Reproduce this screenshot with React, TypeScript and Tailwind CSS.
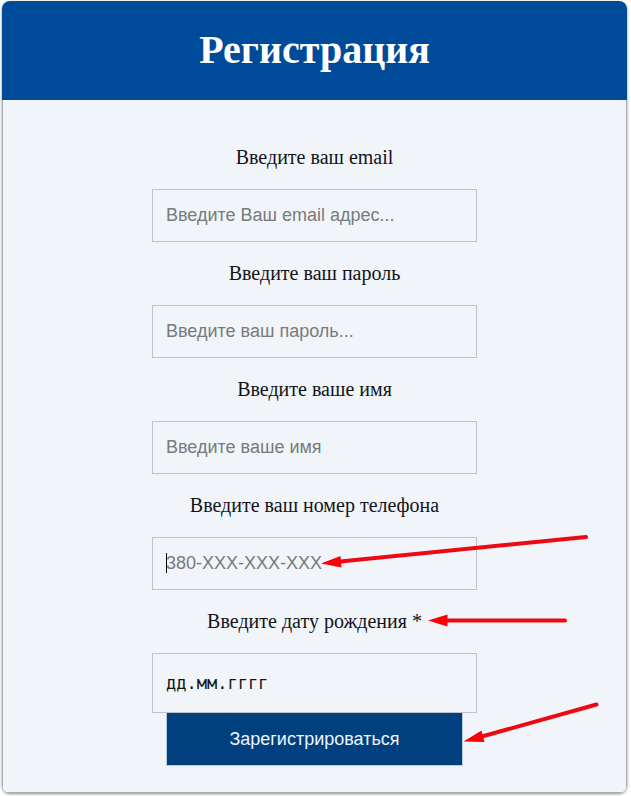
import React from "react";

type FieldProps = {
  id: string;
  label: string;
  placeholder: string;
  type?: string;
  caret?: boolean;
};

const labelClass =
  "block pb-4 pt-4 text-center font-['Liberation_Serif',serif] text-[20px] leading-[31px] text-[#111418]";

function Field({ id, label, placeholder, type = "text", caret = false }: FieldProps) {
  return (
    <div>
      <label htmlFor={id} className={labelClass}>
        {label}
      </label>
      <div className="relative">
        <input
          id={id}
          type={type}
          placeholder={placeholder}
          className="block h-[53px] w-full border border-[#bfc3c9] bg-transparent px-[13px] font-['Liberation_Sans',Arial,sans-serif] text-[18px] text-[#111418] outline-none placeholder:text-[#777a7e]"
        />
        {caret && <span aria-hidden="true" className="absolute left-[14px] top-4 h-5 w-px bg-black" />}
      </div>
    </div>
  );
}

function Arrows() {
  return (
    <svg
      aria-hidden="true"
      viewBox="152 100 325 692"
      width="325"
      height="692"
      className="pointer-events-none absolute left-0 top-0 overflow-visible"
      fill="#fa0007"
      stroke="#ee0811"
      strokeWidth="4"
      strokeLinecap="round"
    >
      <path d="M338 561.7 586 537" />
      <path stroke="none" d="M321 563.5 340.5 556 341.5 567.5Z" />
      <path d="M445 620.5H565" />
      <path stroke="none" d="M428 620.5 447.5 614.5V626.5Z" />
      <path d="M481 736.8 596.5 704.5" />
      <path stroke="none" d="M463.5 741.5 481.5 730.5 484.5 742Z" />
    </svg>
  );
}

export default function App() {
  return (
    <main className="bg-white pb-[3px] pl-[2px] pr-1 pt-px">
      <section className="overflow-hidden rounded-lg bg-[#f1f5fa] shadow-[0_1px_3px_rgba(0,0,0,0.45)]">
        <header className="bg-[#004b99] pb-[26px] pt-[25px] text-center">
          <h1 className="font-['Liberation_Serif',serif] text-[40px] font-bold leading-[48px] text-white">
            Регистрация
          </h1>
        </header>
        <div className="border-x border-b border-[#a9acb1] pb-[26px] pt-[26px]">
          <form className="relative mx-auto w-full max-w-[325px]" onSubmit={(e) => e.preventDefault()}>
            <Field id="email" label="Введите ваш email" placeholder="Введите Ваш email адрес..." type="email" />
            <Field id="password" label="Введите ваш пароль" placeholder="Введите ваш пароль..." type="password" />
            <Field id="name" label="Введите ваше имя" placeholder="Введите ваше имя" />
            <Field id="phone" label="Введите ваш номер телефона" placeholder="380-XXX-XXX-XXX" type="tel" caret />
            <label htmlFor="birthday" className={labelClass}>
              Введите дату рождения *
            </label>
            <input
              id="birthday"
              type="text"
              inputMode="numeric"
              placeholder="дд.мм.гггг"
              className="block h-[60px] w-full border border-[#bfc3c9] bg-transparent px-[13px] font-['DejaVu_Sans_Mono',monospace] text-[17px] text-[#111418] outline-none placeholder:text-[#111418]"
            />
            <div className="px-[14px]">
              <button
                type="submit"
                className="block h-[53px] w-full border border-t-0 border-[#b4cbe0] bg-[#00407f] font-['Liberation_Sans',Arial,sans-serif] text-[18px] text-[#eef5fc]"
              >
                Зарегистрироваться
              </button>
            </div>
            <div className="absolute -top-[26px] left-0">
              <Arrows />
            </div>
          </form>
        </div>
      </section>
    </main>
  );
}
